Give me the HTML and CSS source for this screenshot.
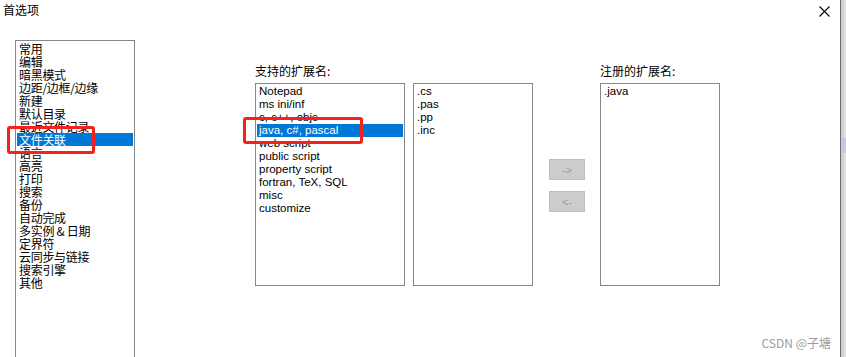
FILE: index.html
```html
<!DOCTYPE html>
<html lang="zh-CN">
<head>
    <meta charset="UTF-8">
    <title>首选项</title>
    <link rel="stylesheet" href="styles.css">
</head>
<body>
    <div class="window">
        <div class="titlebar">
            <span class="title">首选项</span>
            <svg class="close" width="11" height="11" viewBox="0 0 11 11">
                <path d="M0.5 0.5 L10.5 10.5 M10.5 0.5 L0.5 10.5" stroke="#000" stroke-width="1.1" fill="none"/>
            </svg>
        </div>
        <div class="content">
            <ul class="list cats">
                <li>常用</li>
                <li>编辑</li>
                <li>暗黑模式</li>
                <li>边距/边框/边缘</li>
                <li>新建</li>
                <li>默认目录</li>
                <li>最近文件记录</li>
                <li class="selected">文件关联</li>
                <li>语言</li>
                <li>高亮</li>
                <li>打印</li>
                <li>搜索</li>
                <li>备份</li>
                <li>自动完成</li>
                <li>多实例 &amp; 日期</li>
                <li>定界符</li>
                <li>云同步与链接</li>
                <li>搜索引擎</li>
                <li>其他</li>
            </ul>
            <div class="column supported">
                <div class="label">支持的扩展名:</div>
                <div class="boxes">
                    <ul class="list lang">
                        <li>Notepad</li>
                        <li>ms ini/inf</li>
                        <li>c, c++, objc</li>
                        <li class="selected">java, c#, pascal</li>
                        <li>web script</li>
                        <li>public script</li>
                        <li>property script</li>
                        <li>fortran, TeX, SQL</li>
                        <li>misc</li>
                        <li>customize</li>
                    </ul>
                    <ul class="list exts">
                        <li>.cs</li>
                        <li>.pas</li>
                        <li>.pp</li>
                        <li>.inc</li>
                    </ul>
                </div>
            </div>
            <div class="buttons">
                <button class="btn">-&gt;</button>
                <button class="btn">&lt;-</button>
            </div>
            <div class="column registered">
                <div class="label">注册的扩展名:</div>
                <ul class="list exts">
                    <li>.java</li>
                </ul>
            </div>
        </div>
        <div class="mark mark-cat"></div>
        <div class="mark mark-lang"></div>
        <div class="watermark">CSDN @子塘</div>
    </div>
    <div class="edge">
        <div class="edge-thumb"></div>
    </div>
</body>
</html>
```

FILE: styles.css
```css
body {
    margin: 0;
    width: 846px;
    height: 357px;
    overflow: hidden;
    display: flex;
    background-color: #fff;
    font-family: "Liberation Sans", "Noto Sans CJK SC", sans-serif;
    font-size: 11px;
    color: #000;
}
.window {
    position: relative;
    width: 840px;
    height: 357px;
    border-right: 1px solid #6e6e6e;
}
.edge {
    flex: 1;
    background: linear-gradient(to right, #c8c8c8, #e6e6e6);
    padding-top: 138px;
}
.edge-thumb {
    height: 15px;
    background-color: #c9c9dd;
}
.titlebar {
    height: 24px;
    display: flex;
    align-items: flex-start;
    justify-content: space-between;
}
.title {
    font-family: "Noto Sans CJK SC", sans-serif;
    font-size: 12px;
    line-height: 14px;
    padding: 3px 0 0 3px;
}
.close {
    margin: 6px 10px 0 0;
}
.content {
    display: flex;
    align-items: flex-start;
    padding: 16px 0 0 15px;
}
.list {
    list-style: none;
    margin: 0;
    padding: 1px 1px;
    border: 1px solid #828790;
    box-sizing: border-box;
}
.list li {
    height: 13px;
    line-height: 13px;
    padding-left: 2px;
    white-space: nowrap;
}
.list li.selected {
    background-color: #0078d7;
    color: #fff;
}
.cats {
    width: 120px;
    height: 317px;
    border-bottom: none;
    font-family: "Noto Sans CJK SC", sans-serif;
    font-size: 12px;
}
.cats li {
    padding-left: 2px;
    letter-spacing: -0.3px;
}
.column .label {
    font-family: "Noto Sans CJK SC", sans-serif;
    font-size: 12px;
    line-height: 14px;
    height: 27px;
    padding-top: 8px;
    box-sizing: border-box;
}
.column {
    padding-top: 16px;
}
.supported {
    margin-left: 120px;
}
.boxes {
    display: flex;
    gap: 8px;
}
.lang {
    width: 150px;
    height: 203px;
}
.lang li,
.exts li {
    font-size: 11.5px;
}
.exts {
    width: 120px;
    height: 203px;
}
.buttons {
    display: flex;
    flex-direction: column;
    gap: 11px;
    margin: 119px 0 0 16px;
}
.btn {
    width: 36px;
    height: 21px;
    padding: 0;
    background-color: #cccccc;
    border: 1px solid #bfbfbf;
    color: #9a9a9a;
    font-family: "Liberation Sans", sans-serif;
    font-size: 11px;
}
.registered {
    margin-left: 15px;
}
.mark {
    position: absolute;
    border: 3px solid #f5221b;
    border-radius: 3px;
}
.mark-cat {
    left: 7px;
    top: 126px;
    width: 82px;
    height: 22px;
}
.mark-lang {
    left: 243px;
    top: 117px;
    width: 114px;
    height: 21px;
}
.watermark {
    position: absolute;
    right: 9px;
    top: 334px;
    font-family: "Noto Sans CJK SC", sans-serif;
    font-size: 12px;
    color: #9b9b9b;
}
```
